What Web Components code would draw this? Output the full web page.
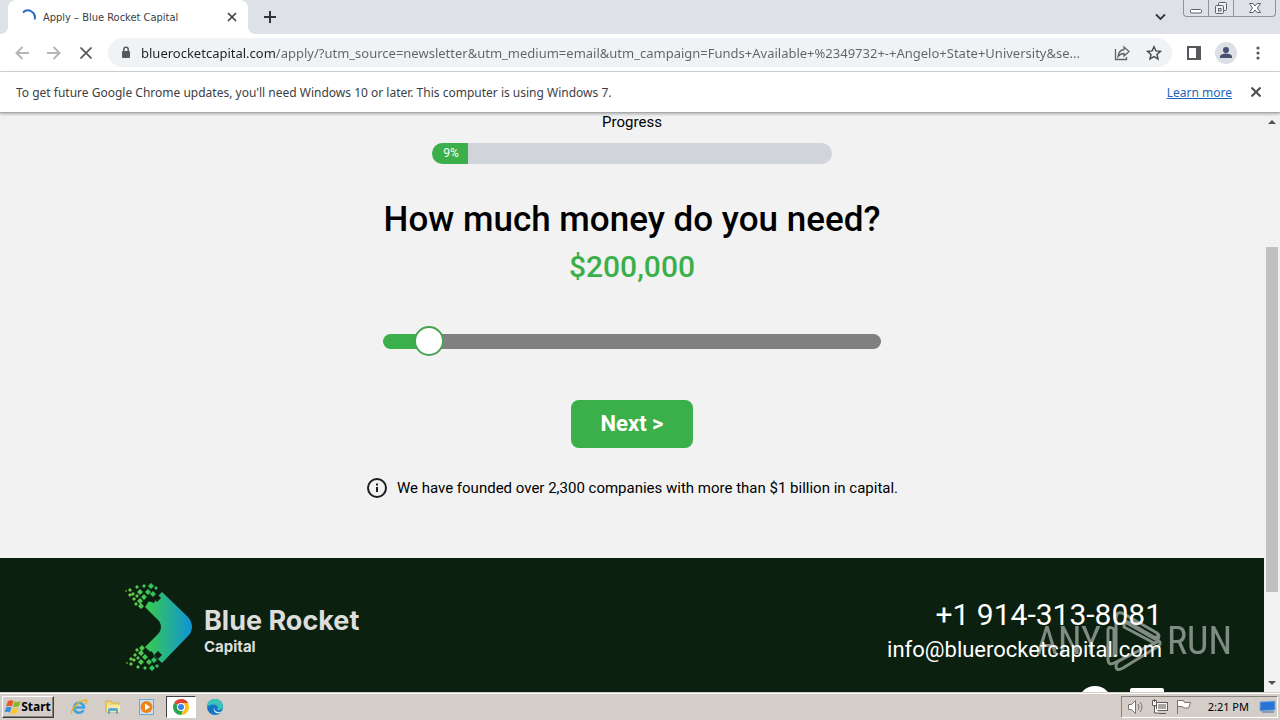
<!DOCTYPE html>
<html lang="en">
<head>
<meta charset="utf-8">
<title>Apply – Blue Rocket Capital</title>
<style>
	body {
		margin: 0;
		height: 100vh;
		display: flex;
		flex-direction: column;
		overflow: hidden;
		font-family: Roboto, sans-serif;
		--ui-font: "Noto Sans", sans-serif;
		--ui-text: 12px;
		--green: #3bb04a;
	}
</style>
</head>
<body>

<browser-tabs>Apply – Blue Rocket Capital</browser-tabs>
<browser-toolbar url="bluerocketcapital.com/apply/?utm_source=newsletter&amp;utm_medium=email&amp;utm_campaign=Funds+Available+%2349732+-+Angelo+State+University&amp;se..."></browser-toolbar>
<info-bar>
	To get future Google Chrome updates, you'll need Windows 10 or later. This computer is using Windows 7.
	<a slot="action" href="#learn">Learn more</a>
</info-bar>
<page-scroller>
	<loan-form>
		<progress-meter value="9">Progress</progress-meter>
		<span slot="question">How much money do you need?</span>
		<amount-slider value="200000" max="3000000"></amount-slider>
		<span slot="note">We have founded over 2,300 companies with more than $1 billion in capital.</span>
	</loan-form>
	<site-footer>
		<span slot="brand">Blue Rocket</span>
		<span slot="sub">Capital</span>
		<a slot="contact" class="phone" href="tel:+19143138081">+1 914-313-8081</a>
		<a slot="contact" class="mail" href="mailto:info@bluerocketcapital.com">info@bluerocketcapital.com</a>
	</site-footer>
</page-scroller>
<task-bar>2:21 PM</task-bar>
<run-watermark></run-watermark>

<script>
customElements.define('browser-tabs',
	class extends HTMLElement
	{
		constructor()
		{
			super();
			const shadowRoot = this.attachShadow({mode: 'open'});

			shadowRoot.innerHTML = `
				<style>
					:host {
						display: flex;
						flex: none;
						height: 34px;
						padding-left: 8px;
						background: #dee1e8;
						font-family: "DejaVu Sans Condensed", sans-serif;
					}
					button {
						display: grid;
						place-items: center;
						padding: 0;
						border: 0;
						background: none;
					}
					.tab {
						position: relative;
						display: flex;
						align-items: center;
						box-sizing: border-box;
						width: 240px;
						padding: 0 8px 0 12px;
						gap: 7px;
						border-radius: 8px 8px 0 0;
						background: white;
						color: #3c4043;
						font-size: 11px;
					}
					.tab::before, .tab::after {
						content: '';
						position: absolute;
						bottom: 0;
						width: 8px;
						height: 8px;
					}
					.tab::before {
						left: -8px;
						background: radial-gradient(circle at 0 0, #dee1e8 8px, white 8px);
					}
					.tab::after {
						right: -8px;
						background: radial-gradient(circle at 100% 0, #dee1e8 8px, white 8px);
					}
					.title {
						flex: 1;
						white-space: nowrap;
					}
					.tab button {
						width: 16px;
						height: 16px;
					}
					.add {
						width: 28px;
						margin-left: 8px;
					}
					.search {
						width: 28px;
						margin-left: auto;
						margin-right: 9px;
					}
					.window {
						display: flex;
						height: 16px;
						margin-right: 4px;
						border: 1px solid #8e929b;
						border-top: 0;
						border-radius: 0 0 4px 4px;
					}
					.window button {
						width: 25px;
						border-right: 1px solid #8e929b;
					}
					.window button:last-child {
						width: 41px;
						border: 0;
					}
				</style>
				<div class="tab" role="tab">
					<svg width="16" height="16" fill="none" stroke="#2b6cc4" stroke-width="2"><path d="M3 3.500A7 7 0 0 1 14.600 10.500"/></svg>
					<span class="title"><slot></slot></span>
					<button aria-label="Close tab"><svg width="10" height="10" stroke="#3c4043" stroke-width="1.7"><path d="M1 1l8 8M9 1l-8 8"/></svg></button>
				</div>
				<button class="add" aria-label="New tab"><svg width="12" height="12" stroke="#30343c" stroke-width="2"><path d="M6 0v12M0 6h12"/></svg></button>
				<button class="search" aria-label="Search tabs"><svg width="11" height="8" fill="none" stroke="#30343c" stroke-width="1.8"><path d="M1 1.5l4.500 4.500 4.500-4.500"/></svg></button>
				<div class="window">
					<button aria-label="Minimize"><svg width="14" height="14" fill="#fff" stroke="#5d6068"><rect x="1.500" y="8.500" width="11" height="3.500" rx="1"/></svg></button>
					<button aria-label="Restore"><svg width="14" height="14" fill="#eef0f4" stroke="#5d6068"><rect x="4.500" y="1.500" width="8" height="8" rx="1"/><rect x="1.500" y="4.500" width="8" height="8" rx="1"/><rect x="4.500" y="7.500" width="2.500" height="2.500"/></svg></button>
					<button aria-label="Close"><svg width="14" height="14" fill="#fff" stroke="#5d6068"><path d="M1.500 2.500h3.500l2 2.500 2-2.500h3.500l-3 4.500 3 4.500H9L7 9l-2 2.500H1.500l3-4.500z"/></svg></button>
				</div>
			`;
		}
	}
);

customElements.define('browser-toolbar',
	class extends HTMLElement
	{
		constructor()
		{
			super();
			const shadowRoot = this.attachShadow({mode: 'open'});

			shadowRoot.innerHTML = `
				<style>
					:host {
						display: flex;
						flex: none;
						align-items: center;
						height: 37px;
						padding: 0 6px;
						border-bottom: 1px solid #d5d7da;
						background: white;
						font-family: var(--ui-font);
					}
					button {
						display: grid;
						place-items: center;
						width: 32px;
						height: 28px;
						padding: 0;
						border: 0;
						background: none;
					}
					.box {
						display: flex;
						flex: 1;
						align-items: center;
						height: 29px;
						margin: 0 6px;
						padding: 0 2px 0 10px;
						border-radius: 15px;
						background: #f0f3f6;
					}
					.box > svg {
						flex: none;
						margin-right: 7px;
					}
					/* host name is darker than the rest of the address */
					input {
						flex: 1;
						min-width: 0;
						height: 24px;
						padding: 0;
						border: 0;
						outline: 0;
						background: linear-gradient(90deg, #202124 var(--host-width), #5f6368 var(--host-width));
						-webkit-background-clip: text;
						background-clip: text;
						color: transparent;
						font: 13px var(--ui-font);
					}
					.face {
						width: 22px;
						height: 22px;
						border-radius: 50%;
						background: #dcdfe6;
					}
				</style>
				<button aria-label="Back"><svg width="14" height="14" fill="none" stroke="#b4b7ba" stroke-width="2"><path d="M14 7H2M7.500 1L1.500 7l6 6"/></svg></button>
				<button aria-label="Forward"><svg width="14" height="14" fill="none" stroke="#b4b7ba" stroke-width="2"><path d="M0 7h12M6.500 1l6 6-6 6"/></svg></button>
				<button aria-label="Stop"><svg width="12" height="12" stroke="#55585c" stroke-width="1.700"><path d="M0.500 0.500l11 11M11.500 0.500l-11 11"/></svg></button>
				<div class="box">
					<svg width="16" height="16"><rect x="4" y="6" width="8" height="7" rx="1" fill="#55585c"/><path d="M5.800 6.500V4.500a2.200 2.200 0 0 1 4.400 0v2" fill="none" stroke="#55585c" stroke-width="1.500"/></svg>
					<input aria-label="Address">
					<button aria-label="Share"><svg width="16" height="16" fill="none" stroke="#5f6368" stroke-width="1.300"><path d="M1.500 4v10.500h11V12M10 2l5 4.500-5 4.500V8.500c-3 0-4.500 1-6 3 .5-4 2.500-6.500 6-7z"/></svg></button>
					<button aria-label="Bookmark"><svg width="16" height="16" fill="none" stroke="#4d5156" stroke-width="1.500"><path d="M8 1.800l1.900 4.100 4.500.5-3.400 3 1 4.500L8 11.600l-4 2.300 1-4.500-3.400-3 4.500-.5z"/></svg></button>
				</div>
				<button aria-label="Side panel"><svg width="14" height="14"><path d="M1 1h12v12H1z" fill="none" stroke="#55585c" stroke-width="2"/><path d="M9 1h4v12H9z" fill="#55585c"/></svg></button>
				<button aria-label="Profile"><svg class="face" viewBox="0 0 22 22" fill="#47536e"><circle cx="11" cy="8" r="3"/><path d="M5 16v-1.500c0-2 3.500-3 6-3s6 1 6 3V16z"/></svg></button>
				<button aria-label="Menu"><svg width="4" height="14" fill="#55585c"><circle cx="2" cy="2" r="1.600"/><circle cx="2" cy="7" r="1.600"/><circle cx="2" cy="12" r="1.600"/></svg></button>
			`;
		}

		connectedCallback()
		{
			let url = this.getAttribute('url');
			let input = this.shadowRoot.querySelector('input');
			input.value = url;

			// measure the host name
			let ctx = document.createElement('canvas').getContext('2d');
			ctx.font = getComputedStyle(input).font;
			let w = Math.round(ctx.measureText(url.split('/')[0]).width);
			input.style.setProperty('--host-width', `${w}px`);
		}
	}
);

customElements.define('info-bar',
	class extends HTMLElement
	{
		constructor()
		{
			super();
			const shadowRoot = this.attachShadow({mode: 'open'});

			shadowRoot.innerHTML = `
				<style>
					:host {
						display: flex;
						flex: none;
						align-items: center;
						height: 40px;
						padding: 0 16px;
						gap: 16px;
						border-bottom: 1px solid #a9a9a9;
						box-shadow: 0 1px 3px rgba(0, 0, 0, 0.3);
						z-index: 1;
						background: white;
						color: #3c4043;
						font-family: var(--ui-font);
						font-size: var(--ui-text);
					}
					p {
						flex: 1;
						margin: 0;
					}
					::slotted(a) {
						color: #1a66b8;
					}
					button {
						display: grid;
						place-items: center;
						width: 16px;
						height: 16px;
						padding: 0;
						border: 0;
						background: none;
					}
				</style>
				<p><slot></slot></p>
				<slot name="action"></slot>
				<button aria-label="Dismiss"><svg width="10" height="10" stroke="#4a4d51" stroke-width="2"><path d="M0.500 0.500l9 9M9.500 0.500l-9 9"/></svg></button>
			`;
		}
	}
);

customElements.define('page-scroller',
	class extends HTMLElement
	{
		constructor()
		{
			super();
			const shadowRoot = this.attachShadow({mode: 'open'});

			shadowRoot.innerHTML = `
				<style>
					:host {
						display: flex;
						flex: 1;
						min-height: 0;
						background: #f2f2f2;
					}
					main {
						display: flex;
						flex: 1;
						flex-direction: column;
						overflow: hidden;
					}
					.bar {
						display: flex;
						flex-direction: column;
						align-items: center;
						width: 16px;
						background: #f1f1f1;
					}
					.bar svg {
						flex: none;
					}
					.before {
						flex: 117;
					}
					.thumb {
						flex: 345;
						width: 12px;
						background: #c1c1c1;
					}
					.after {
						flex: 83;
					}
				</style>
				<main><slot></slot></main>
				<div class="bar">
					<svg width="16" height="17" fill="#505050"><path d="M4 11l4-4 4 4z"/></svg>
					<div class="before"></div>
					<div class="thumb"></div>
					<div class="after"></div>
					<svg width="16" height="17" fill="#505050"><path d="M4 6l4 4 4-4z"/></svg>
				</div>
			`;
		}
	}
);

customElements.define('progress-meter',
	class extends HTMLElement
	{
		constructor()
		{
			super();
			const shadowRoot = this.attachShadow({mode: 'open'});

			shadowRoot.innerHTML = `
				<style>
					:host {
						display: flex;
						flex-direction: column;
						align-items: center;
						gap: 12px;
						width: 100%;
						font-size: 15px;
						line-height: 18px;
					}
					.track {
						width: 400px;
						max-width: 100%;
						border-radius: 11px;
						overflow: hidden;
						background: #d1d5db;
					}
					.fill {
						padding-left: 2px;
						box-sizing: border-box;
						background: var(--green);
						color: white;
						text-align: center;
						font-size: 12px;
						line-height: 21px;
					}
				</style>
				<div id="label"><slot></slot></div>
				<div class="track" role="progressbar" aria-labelledby="label"><div class="fill"></div></div>
			`;
		}

		connectedCallback()
		{
			let v = this.getAttribute('value');
			let fill = this.shadowRoot.querySelector('.fill');
			fill.style.width = `${v}%`;
			fill.textContent = `${v}%`;
			fill.parentNode.setAttribute('aria-valuenow', v);
		}
	}
);

customElements.define('amount-slider',
	class extends HTMLElement
	{
		constructor()
		{
			super();
			const shadowRoot = this.attachShadow({mode: 'open'});

			shadowRoot.innerHTML = `
				<style>
					:host {
						display: flex;
						flex-direction: column;
						align-items: center;
						gap: 41px;
						width: 498px;
						max-width: 100%;
					}
					output {
						color: var(--green);
						font-size: 30px;
						font-weight: 500;
						line-height: 36px;
					}
					input {
						-webkit-appearance: none;
						appearance: none;
						width: 100%;
						height: 30px;
						margin: 0;
						background: none;
					}
					input::-webkit-slider-runnable-track {
						height: 15px;
						border-radius: 8px;
						background: linear-gradient(90deg, var(--green) var(--at), #808080 var(--at));
					}
					input::-webkit-slider-thumb {
						-webkit-appearance: none;
						box-sizing: border-box;
						width: 30px;
						height: 30px;
						margin-top: -8px;
						border: 2px solid #46a452;
						border-radius: 50%;
						background: white;
					}
				</style>
				<output for="amount"></output>
				<input id="amount" type="range" min="0" step="10000" aria-label="Amount">
			`;
		}

		update()
		{
			let input = this.shadowRoot.querySelector('input');
			let output = this.shadowRoot.querySelector('output');
			output.textContent = '$' + Number(input.value).toLocaleString('en-US');
			input.style.setProperty('--at', `calc(15px + (100% - 30px) * ${input.value / input.max})`);
		}

		connectedCallback()
		{
			let input = this.shadowRoot.querySelector('input');
			input.max = this.getAttribute('max');
			input.value = this.getAttribute('value');
			input.addEventListener('input', () => {
				this.update();
			});
			this.update();
		}
	}
);

customElements.define('loan-form',
	class extends HTMLElement
	{
		constructor()
		{
			super();
			const shadowRoot = this.attachShadow({mode: 'open'});

			shadowRoot.innerHTML = `
				<style>
					:host {
						display: block;
						flex: none;
						padding-bottom: 58px;
						color: black;
					}
					form {
						display: flex;
						flex-direction: column;
						align-items: center;
					}
					slot:not([name]) {
						display: contents;
					}
					h1 {
						order: 1;
						margin: 34px 0 7px;
						font-size: 35px;
						font-weight: 500;
						line-height: 44px;
					}
					::slotted(amount-slider) {
						order: 2;
					}
					button {
						order: 3;
						height: 48px;
						margin: 44px 0 29px;
						padding: 0 30px 2px;
						border: 0;
						border-radius: 8px;
						background: var(--green);
						color: white;
						font: bold 22px Roboto, sans-serif;
					}
					.note {
						display: flex;
						order: 4;
						align-items: center;
						gap: 9px;
						margin: 0;
						font-size: 15px;
						line-height: 23px;
					}
				</style>
				<form>
					<slot></slot>
					<h1><slot name="question"></slot></h1>
					<button type="button">Next &gt;</button>
					<p class="note">
						<svg width="22" height="22" viewBox="0 0 22 22" fill="none" stroke="#1c1c22" stroke-width="2"><circle cx="11" cy="10" r="9"/><path d="M11 9v5M11 5.500v2"/></svg>
						<slot name="note"></slot>
					</p>
				</form>
			`;
		}
	}
);

customElements.define('site-footer',
	class extends HTMLElement
	{
		constructor()
		{
			super();
			const shadowRoot = this.attachShadow({mode: 'open'});

			shadowRoot.innerHTML = `
				<style>
					:host {
						display: flex;
						flex: 1 0 auto;
						justify-content: space-between;
						align-items: flex-start;
						padding: 22px 100px 0 102px;
						background: #0c200f;
						color: white;
					}
					.logo {
						display: flex;
						align-items: center;
						gap: 7px;
						color: #dcdedc;
						font-family: Inter, sans-serif;
						font-weight: bold;
					}
					.name {
						display: flex;
						flex-direction: column;
						padding-top: 8px;
					}
					::slotted([slot=brand]) {
						font-size: 27px;
						line-height: 32px;
					}
					::slotted([slot=sub]) {
						font-size: 15px;
						line-height: 20px;
					}
					.contact {
						display: flex;
						flex-direction: column;
						align-items: flex-end;
						padding-top: 16px;
					}
					::slotted(a) {
						padding-right: 2px;
						color: white;
						text-decoration: none;
					}
					::slotted(.phone) {
						font-size: 30px;
						line-height: 38px;
					}
					::slotted(.mail) {
						font-size: 22px;
						line-height: 32px;
					}
					.social {
						display: flex;
						align-items: flex-start;
						gap: 18px;
						padding-top: 20px;
					}
				</style>
				<div class="logo">
					<svg width="95" height="94" viewBox="-18 0 95 94">
						<defs>
							<linearGradient id="g" gradientUnits="userSpaceOnUse" x1="5" y1="0" x2="72" y2="0">
								<stop offset="0" stop-color="#7ac943"/>
								<stop offset="0.350" stop-color="#35c857"/>
								<stop offset="0.600" stop-color="#28b388"/>
								<stop offset="1" stop-color="#0e93d6"/>
							</linearGradient>
						</defs>
						<g fill="url(#g)">
							<path d="M42 12L68 37Q72 42 72 47Q72 52 68 56L42 83L25 67L39 53Q43 47 39 41L25 27L29 21L34 23L37 17z"/>
							<path id="dots" d="M10 8l2 2-2 2-2-2zM17 5l2 2-2 2-2-2zM24 4l2 2-2 2-2-2zM31 3l3 3-3 3-3-3zM36 6l2 2-2 2-2-2zM13 12l2 2-2 2-2-2zM20 9l3 3-3 3-3-3zM28 9l3 3-3 3-3-3zM10 13l2 2-2 2-2-2zM17 14l2 2-2 2-2-2zM24 14l3 3-3 3-3-3zM14 17l2 2-2 2-2-2zM20 18l3 3-3 3-3-3zM16 22l2 2-2 2-2-2zM21 23l3 3-3 3-3-3zM33 11l3 3-3 3-3-3zM6 10l1 1-1 1-1-1z"/>
							<use href="#dots" transform="matrix(1 0 0 -1 1 94)"/>
						</g>
						<path d="M37 14l4 4-4 4-4-4zM30 16l3 3-3 3-3-3zM38 71l4 4-4 4-4-4zM31 71l3 3-3 3-3-3z" fill="#0c200f"/>
					</svg>
					<div class="name">
						<slot name="brand"></slot>
						<slot name="sub"></slot>
					</div>
				</div>
				<div class="contact">
					<slot name="contact"></slot>
					<div class="social">
						<svg width="34" height="34" fill="#fff"><circle cx="17" cy="17" r="17"/></svg>
						<svg width="34" height="34" fill="#fff"><rect y="2" width="34" height="32" rx="2"/></svg>
					</div>
				</div>
			`;
		}
	}
);

customElements.define('task-bar',
	class extends HTMLElement
	{
		constructor()
		{
			super();
			const shadowRoot = this.attachShadow({mode: 'open'});

			shadowRoot.innerHTML = `
				<style>
					:host {
						display: flex;
						flex: none;
						align-items: center;
						height: 27px;
						padding: 0 2px;
						border-top: 1px solid #d5cec8;
						box-shadow: inset 0 1px white;
						background: #d5cec8;
						color: black;
						font-family: var(--ui-font);
						font-size: 11px;
					}
					button {
						display: flex;
						align-items: center;
						justify-content: center;
						box-sizing: border-box;
						width: 30px;
						height: 22px;
						padding: 0;
						border: 0;
						background: none;
						color: black;
						font: bold 12px var(--ui-font);
					}
					.start {
						width: 52px;
						border: 1px solid;
						border-color: white #404040 #404040 white;
						box-shadow: inset -1px -1px #87817c;
					}
					.apps {
						display: flex;
						gap: 4px;
						margin-left: 10px;
					}
					.active {
						border: 1px solid;
						border-color: #404040 white white #404040;
						background: white;
					}
					.tray {
						display: flex;
						align-items: center;
						box-sizing: border-box;
						height: 22px;
						margin-left: auto;
						padding: 0 1px 0 5px;
						gap: 6px;
						border: 1px solid;
						border-color: #87817c white white #87817c;
					}
					time {
						padding: 0 4px 0 9px;
					}
				</style>
				<button class="start">
					<svg width="16" height="16"><path d="M3 2q3-1.500 5.500 0L7 7.500q-3-1.500-6 0z" fill="#e8582a"/><path d="M9.500 2.500q3 1 6-.5L14 7q-3 1.500-6 .500z" fill="#7fba28"/><path d="M1 8.500q3-1.500 5.500 0L5 13.500q-3-1.500-5.500 0z" fill="#3b8de0"/><path d="M7.500 9q3 1 6-.5L12 14q-3 1.500-6 .500z" fill="#fbc62b"/></svg>
					Start
				</button>
				<div class="apps">
					<button aria-label="Internet Explorer"><svg width="18" height="18" fill="none"><path d="M13.500 12a5 5 0 1 1 .5-2.500H5" stroke="#3fa4e0" stroke-width="2.600"/><path d="M2 15.500C0 13 8 2.500 16 2q2 1-1 4" stroke="#e3b52d" stroke-width="1.500"/></svg></button>
					<button aria-label="Explorer"><svg width="18" height="18"><path d="M2 3h5l1 2h7v9H2z" fill="#f0d777" stroke="#d3b24c"/><path d="M3 7h13v7H3z" fill="#f8eaa5"/><path d="M4 16v-4q0-2 2-2h6q2 0 2 2v4h-2v-3H6v3z" fill="#58abd9"/></svg></button>
					<button aria-label="Media Player"><svg width="18" height="18"><rect x="1.500" y="1.500" width="14" height="15" fill="#c6e2f7" stroke="#6fa6d0"/><circle cx="8.500" cy="9" r="6" fill="#f08319"/><path d="M7 5.500l5 3.500-5 3.500z" fill="#fff"/></svg></button>
					<button class="active" aria-label="Chrome"><svg width="16" height="16"><path d="M8 8L1.100 4A8 8 0 0 1 14.900 4z" fill="#df4434"/><path d="M8 8V0L14.900 4A8 8 0 0 1 8 16l3.500-6z" fill="#fbc116"/><path d="M8 8h3.500L8 16A8 8 0 0 1 1.100 4z" fill="#2da24c"/><path d="M8 4V0A8 8 0 0 1 14.900 4z" fill="#df4434"/><circle cx="8" cy="8" r="4" fill="#fff"/><circle cx="8" cy="8" r="3" fill="#3f7fec"/></svg></button>
					<button aria-label="Edge"><svg width="16" height="16"><circle cx="8" cy="8" r="8" fill="#1574c4"/><path d="M0 8a8 8 0 0 1 16-.5c0 3-4 4.500-6 3 2-2 0-5-3.500-5Q2 5.500 0 8z" fill="#3cc3b8"/><path d="M7 8q0 5 5 5 2 0 3.500-1.500l-1 1.500Q12 15 9 14 6 12 7 8z" fill="#d5ebf4"/></svg></button>
				</div>
				<div class="tray">
					<svg width="18" height="16" fill="#fff" stroke="#77736f"><path d="M1.500 5.500h3l4-4v13l-4-4h-3z"/><path d="M11 5q2 3 0 6M13 3q4 5 0 10" fill="none"/></svg>
					<svg width="18" height="16" fill="#fff" stroke="#5e5b58"><rect x="5.500" y="3.500" width="11" height="8"/><path d="M7 5h8v5H7z" fill="#aaa6a2" stroke="none"/><path d="M8 14.500h7M3.500 7v7H8M1.500 1.500h4v5h-4zM3.500 0v3"/></svg>
					<svg width="18" height="16" fill="#fff" stroke="#77736f"><path d="M2.500 1v14M2.500 1.500h6l1 2h6l-2 5.500H8.500l-1-1.500h-5z"/></svg>
					<time><slot></slot></time>
					<svg width="17" height="14"><path d="M1 2l15-1v9l-15 1z" fill="#2773d8" stroke="#83a7d4"/><path d="M3 12h12" stroke="#44699a"/></svg>
				</div>
			`;
		}
	}
);

customElements.define('run-watermark',
	class extends HTMLElement
	{
		constructor()
		{
			super();
			const shadowRoot = this.attachShadow({mode: 'open'});

			shadowRoot.innerHTML = `
				<style>
					:host {
						position: absolute;
						right: 48px;
						bottom: 47px;
						z-index: 2;
						display: flex;
						align-items: center;
						gap: 5px;
						color: white;
						opacity: 0.48;
						font: 38px "Roboto Condensed", "Liberation Sans Narrow", sans-serif;
						line-height: 64px;
						pointer-events: none;
					}
				</style>
				<span>ANY</span>
				<svg width="56" height="62" viewBox="0 0 56 62" fill="none" stroke="#fff" stroke-width="3" stroke-linejoin="round"><path d="M2 21V49Q2 56 8 53L53 31Q56 34 51 37L17 58Q10 62 10 56Q10 53 13 51L30 42M2 21Q2 15 8 19V47M10 46V9Q10 0 18 4L51 23Q55 26 51 30L47 28L19 12M51 23Q54 28 48 27L24 13Q18 9 18 17L50 34"/></svg>
				<span>RUN</span>
			`;
		}
	}
);
</script>
</body>
</html>
